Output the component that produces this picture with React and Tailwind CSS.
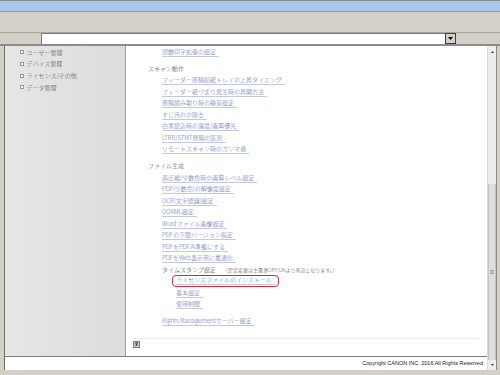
import React from 'react';

const sideItems = ['ユーザー管理', 'デバイス管理', 'ライセンス/その他', 'データ管理'];

const scanLinks = [
  'フィーダー原稿給紙トレイの上昇タイミング',
  'フィーダー紙づまり発生時の再開方法',
  '原稿読み取り時の静音設定',
  'すじ汚れの除去',
  '白黒読込時の速度/画質優先',
  'LTRR/STMT原稿の区別',
  'リモートスキャン時のガンマ値',
];

const fileLinks = [
  '高圧縮/少数色時の画質レベル設定',
  'PDF(少数色)の解像度設定',
  'OCR(文字認識)設定',
  'OOXML設定',
  'Wordファイル画像設定',
  'PDFの下限バージョン指定',
  'PDFをPDF/A準拠にする',
  'PDFをWeb表示用に最適化',
];

function Link({ children, indent = 'pl-[36px]' }) {
  return (
    <div className={`h-[11.5px] leading-[11.5px] ${indent}`}>
      <span className="inline-block leading-[8px] pr-[3px] border-b border-[#c2c8e0] text-[#5468b0]">{children}</span>
    </div>
  );
}

function Heading({ children, className = '' }) {
  return <div className={`h-[11.5px] leading-[11.5px] pl-[22px] text-[#444] ${className}`}>{children}</div>;
}

export default function App() {
  return (
    <div className="w-[500px] h-[375px] bg-[#d4d0c8] flex flex-col font-['Noto_Sans_CJK_JP','Noto_Sans',sans-serif] text-[6px] font-light overflow-hidden">
      {/* title bar */}
      <div className="h-[12px] border-t border-[#8a8a8a] border-b border-b-[#9a9a9a] bg-[#a6c9ef]" />
      {/* toolbar */}
      <div className="h-[21px] border-b border-[#a8a49c]" />
      {/* address row */}
      <div className="h-[13px] flex items-stretch pl-[41px] pr-[44px] border-b-2 border-[#8c8c8c]">
        <div className="flex-1 bg-white border-l border-t border-[#7a7a7a]" />
        <div className="w-[11px] bg-[#d4d0c8] border border-[#404040] flex items-center justify-center">
          <svg width="5" height="3" viewBox="0 0 5 3"><path d="M0 0h5L2.5 3z" fill="#000" /></svg>
        </div>
      </div>
      {/* main */}
      <div className="flex-1 flex pl-[4px] pr-[3px] pb-[5px]">
        <div className="flex-1 flex flex-col border-l border-[#6e6e6e]">
          <div className="flex-1 flex">
            {/* sidebar */}
            <div className="w-[121px] bg-gradient-to-r from-[#e6e6e6] to-[#dcdcdc] border-r border-[#a0a0a0] pt-[0.5px]">
              {sideItems.map((s) => (
                <div key={s} className="h-[11.7px] leading-[11.7px] pl-[15px] flex items-center gap-[2.5px] text-[#4a4a4a]">
                  <span className="w-[4px] h-[4px] border border-[#9a9a9a] bg-[#f4f4f4]" />
                  <span>{s}</span>
                </div>
              ))}
            </div>
            {/* content */}
            <div className="flex-1 bg-white flex flex-col">
              <div className="flex-1">
                <Link>部数印字拡張の設定</Link>
                <Heading className="mt-[5px]">スキャン動作</Heading>
                {scanLinks.map((t) => <Link key={t}>{t}</Link>)}
                <Heading className="mt-[5.5px]">ファイル生成</Heading>
                {fileLinks.map((t) => <Link key={t}>{t}</Link>)}
                <div className="h-[11.5px] leading-[11.5px] pl-[36px] text-[#444] flex">
                  <span className="w-[61px]">タイムスタンプ設定</span>
                  <span className="text-[5px] text-[#555]">（設定変更は主電源OFF/ONより有効となります。）</span>
                </div>
                <div className="h-[11.5px] pl-[46px] flex items-center">
                  <span className="inline-flex items-center h-[12px] px-[3px] border-[1.5px] border-[#e0262a] rounded-[4px]">
                    <span className="inline-block leading-[8px] pr-[3px] border-b border-[#c2c8e0] text-[#5468b0]">ライセンスファイルのインストール</span>
                  </span>
                </div>
                <Link indent="pl-[50px]">基本設定</Link>
                <Link indent="pl-[50px]">使用制限</Link>
                <div className="mt-[5.5px]">
                  <Link>Rights Managementサーバー設定</Link>
                </div>
              </div>
              <div className="mx-[8px] border-t border-[#ececec] h-[18px] pt-[2px]">
                <svg width="7" height="7" viewBox="0 0 7 7" className="-ml-[1px]">
                  <rect x="0.5" y="0.5" width="6" height="6" fill="#d0d0d0" stroke="#7a7a7a" />
                  <path d="M2 2h3" stroke="#222" />
                  <path d="M3.5 2.5L2 4.5h3z" fill="#222" />
                </svg>
              </div>
            </div>
          </div>
          {/* footer */}
          <div className="h-[14px] bg-white border-t border-[#7c7c7c] flex items-center justify-end pr-[4px] font-['Liberation_Sans',sans-serif] font-normal text-[5.5px] text-[#222]">
            Copyright CANON INC. 2016 All Rights Reserved
          </div>
        </div>
        {/* scrollbar */}
        <div className="w-[10px] bg-[#ededed] border-l border-[#d8d8d8] border-r border-r-[#8a8a8a] flex flex-col">
          <div className="h-[12px] flex items-center justify-center">
            <svg width="3" height="2" viewBox="0 0 3 2"><path d="M0 2h3L1.5 0z" fill="#444" /></svg>
          </div>
          <div className="h-[126px]" />
          <div className="flex-1 bg-[#dedede] border-x border-[#c4c4c4] flex items-center justify-center">
            <svg width="4" height="4" viewBox="0 0 4 4"><path d="M0 0.5h4M0 2h4M0 3.5h4" stroke="#888" strokeWidth="0.7" /></svg>
          </div>
          <div className="h-[10px] flex items-center justify-center">
            <svg width="3" height="2" viewBox="0 0 3 2"><path d="M0 0h3L1.5 2z" fill="#444" /></svg>
          </div>
        </div>
      </div>
    </div>
  );
}
